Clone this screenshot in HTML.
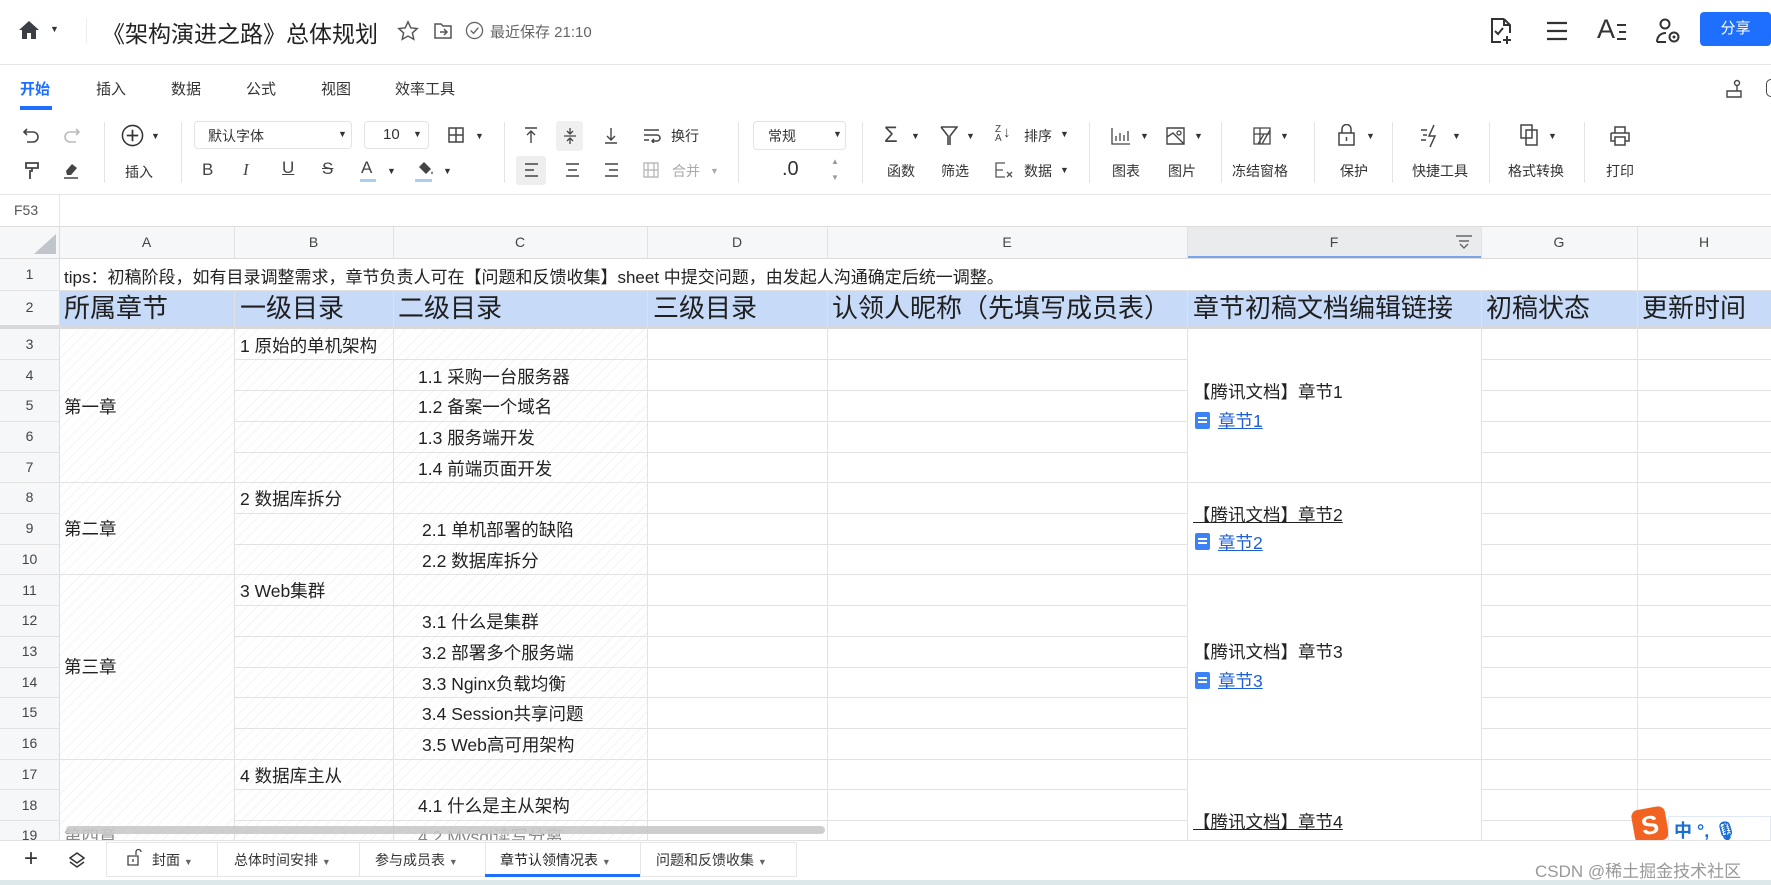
<!DOCTYPE html>
<html><head><meta charset="utf-8"><style>
*{margin:0;padding:0;box-sizing:border-box}
body{width:1771px;height:885px;overflow:hidden;background:#fff;position:relative;font-family:"Liberation Sans","Noto Sans CJK SC",sans-serif;color:#222}
.a{position:absolute;white-space:nowrap}
.hl{position:absolute;height:1px;background:#e2e2e2}
.vl{position:absolute;width:1px;background:#e2e2e2}
.t{font-size:14px;color:#333}
.tb{font-size:14px;color:#333;transform:translateX(-50%)}
.ic{position:absolute}
.car{position:absolute;font-size:9px;color:#333}
.sep{position:absolute;top:122px;height:61px;width:1px;background:#e4e4e4}
.rn{position:absolute;left:0;width:59px;text-align:center;font-size:14px;color:#444}
.c{position:absolute;font-size:17.5px;color:#222;white-space:nowrap;margin-top:-2px}
.h2{position:absolute;top:291px;height:34px;line-height:34px;font-size:26px;color:#1f1f1f}
</style></head><body>

<!-- top bar -->
<svg class="ic" style="left:18px;top:20px" width="22" height="20" viewBox="0 0 22 20"><path d="M11 1 L21 10 L18 10 L18 19 L13 19 L13 13 L9 13 L9 19 L4 19 L4 10 L1 10 Z" fill="#3b3f45"/></svg>
<div class="car" style="left:50px;top:24px">▼</div>
<div class="vl" style="left:86px;top:18px;height:26px;background:#eee"></div>
<div class="a" style="left:102px;top:15px;font-size:23px;color:#222">《架构演进之路》总体规划</div>
<svg class="ic" style="left:397px;top:20px" width="22" height="22" viewBox="0 0 24 24"><path d="M12 2l3 6.5 7 .8-5.2 4.8 1.5 7-6.3-3.6-6.3 3.6 1.5-7L2 9.3l7-.8z" fill="none" stroke="#555" stroke-width="1.6"/></svg>
<svg class="ic" style="left:433px;top:21px" width="20" height="20" viewBox="0 0 20 20"><path d="M2 3h6l2 2h8v12H2z" fill="none" stroke="#555" stroke-width="1.5"/><path d="M7 11h7M11 8l3 3-3 3" fill="none" stroke="#555" stroke-width="1.5"/></svg>
<svg class="ic" style="left:465px;top:21px" width="19" height="19" viewBox="0 0 20 20"><circle cx="10" cy="10" r="8.5" fill="none" stroke="#666" stroke-width="1.4"/><path d="M6 10l3 3 5-6" fill="none" stroke="#666" stroke-width="1.5"/></svg>
<div class="a" style="left:490px;top:21px;font-size:15px;color:#666">最近保存 21:10</div>
<svg class="ic" style="left:1489px;top:17px" width="26" height="28" viewBox="0 0 26 28"><path d="M15 2H3v23h9M15 2l6 6v8M15 2v6h6" fill="none" stroke="#333" stroke-width="2"/><path d="M6 14l3 3 5-6M18 19v8M14 23h8" fill="none" stroke="#333" stroke-width="2"/></svg>
<svg class="ic" style="left:1546px;top:20px" width="22" height="22" viewBox="0 0 22 22"><path d="M1 3h20M1 11h20M1 19h20" stroke="#333" stroke-width="2.2"/></svg>
<div class="a" style="left:1597px;top:14px;font-size:27px;color:#333">A</div>
<svg class="ic" style="left:1615px;top:22px" width="12" height="20" viewBox="0 0 12 20"><path d="M2 3h9M4 10h7M2 17h9" stroke="#333" stroke-width="2"/></svg>
<svg class="ic" style="left:1654px;top:17px" width="28" height="28" viewBox="0 0 28 28"><circle cx="11" cy="7" r="4.5" fill="none" stroke="#333" stroke-width="2"/><path d="M3 25c0-6 4-9 9-9" fill="none" stroke="#333" stroke-width="2"/><path d="M3 25h9" stroke="#333" stroke-width="2"/><circle cx="20" cy="20" r="4.5" fill="none" stroke="#333" stroke-width="2"/><circle cx="20" cy="20" r="1.5" fill="#333"/></svg>
<div class="a" style="left:1700px;top:12px;width:71px;height:34px;background:#1e6fff;border-radius:4px;color:#fff;font-size:15px;text-align:center;line-height:34px">分享</div>
<div class="hl" style="left:0;top:64px;width:1771px;background:#e6e6e6"></div>

<!-- menu tabs -->
<div class="a" style="left:20px;top:78px;font-size:15px;color:#1e6fff;font-weight:bold">开始</div>
<div class="a" style="left:20px;top:106px;width:32px;height:4px;background:#1e6fff"></div>
<div class="a" style="left:96px;top:78px;font-size:15px;color:#333">插入</div>
<div class="a" style="left:171px;top:78px;font-size:15px;color:#333">数据</div>
<div class="a" style="left:246px;top:78px;font-size:15px;color:#333">公式</div>
<div class="a" style="left:321px;top:78px;font-size:15px;color:#333">视图</div>
<div class="a" style="left:395px;top:78px;font-size:15px;color:#333">效率工具</div>
<svg class="ic" style="left:1725px;top:79px" width="18" height="20" viewBox="0 0 18 20"><circle cx="12" cy="4" r="2.5" fill="none" stroke="#444" stroke-width="1.4"/><path d="M12 7v5M2 12h14v6H2z" fill="none" stroke="#444" stroke-width="1.4"/></svg>
<div class="a" style="left:1766px;top:79px;width:10px;height:18px;border:1.5px solid #444;border-radius:9px"></div>

<!-- toolbar -->
<div class="sep" style="left:104px"></div><div class="sep" style="left:181px"></div><div class="sep" style="left:504px"></div><div class="sep" style="left:738px"></div><div class="sep" style="left:862px"></div><div class="sep" style="left:1089px"></div><div class="sep" style="left:1221px"></div><div class="sep" style="left:1314px"></div><div class="sep" style="left:1392px"></div><div class="sep" style="left:1489px"></div><div class="sep" style="left:1584px"></div>

<svg class="ic" style="left:22px;top:127px" width="18" height="16" viewBox="0 0 18 16"><path d="M5 2L2 5l3 3M2 5h9a5 5 0 010 10H5" fill="none" stroke="#444" stroke-width="1.6"/></svg>
<svg class="ic" style="left:63px;top:127px" width="18" height="16" viewBox="0 0 18 16"><path d="M13 2l3 3-3 3M16 5H7a5 5 0 000 10h6" fill="none" stroke="#bbb" stroke-width="1.6"/></svg>
<svg class="ic" style="left:24px;top:161px" width="16" height="19" viewBox="0 0 16 19"><path d="M2 2h12v5H2zM8 7v3H6v8" fill="none" stroke="#444" stroke-width="1.8"/></svg>
<svg class="ic" style="left:62px;top:161px" width="18" height="18" viewBox="0 0 18 18"><path d="M4 10l6-7 5 4-6 7H5z" fill="#444"/><path d="M2 17h14" stroke="#444" stroke-width="1.5"/></svg>

<svg class="ic" style="left:121px;top:124px" width="23" height="23" viewBox="0 0 24 24"><circle cx="12" cy="12" r="10.5" fill="none" stroke="#333" stroke-width="1.6"/><path d="M12 6v12M6 12h12" stroke="#333" stroke-width="1.8"/></svg>
<div class="car" style="left:151px;top:131px">▼</div>
<div class="a t" style="left:125px;top:162px">插入</div>

<div class="a" style="left:194px;top:121px;width:158px;height:28px;border:1px solid #e3e3e3;border-radius:4px"></div>
<div class="a t" style="left:208px;top:126px">默认字体</div>
<div class="car" style="left:338px;top:129px">▼</div>
<div class="a" style="left:364px;top:121px;width:65px;height:28px;border:1px solid #e3e3e3;border-radius:4px"></div>
<div class="a" style="left:383px;top:126px;font-size:15px;color:#333">10</div>
<div class="car" style="left:413px;top:129px">▼</div>
<svg class="ic" style="left:448px;top:127px" width="16" height="16" viewBox="0 0 16 16"><path d="M1 1h14v14H1zM8 1v14M1 8h14" fill="none" stroke="#444" stroke-width="1.5"/></svg>
<div class="car" style="left:475px;top:131px">▼</div>

<div class="a" style="left:202px;top:160px;font-size:17px;color:#444">B</div>
<div class="a" style="left:243px;top:160px;font-size:17px;color:#444;font-family:'Liberation Serif',serif;font-style:italic">I</div>
<div class="a" style="left:282px;top:158px;font-size:17px;color:#444;text-decoration:underline">U</div>
<div class="a" style="left:322px;top:159px;font-size:17px;color:#444;text-decoration:line-through">S</div>
<div class="a" style="left:361px;top:158px;font-size:17px;color:#444">A</div>
<div class="a" style="left:360px;top:179px;width:16px;height:3px;background:#a8cfef"></div>
<div class="car" style="left:387px;top:166px">▼</div>
<svg class="ic" style="left:416px;top:161px" width="18" height="16" viewBox="0 0 18 16"><path d="M8 1l7 7-5 5-7-7z" fill="#444"/><path d="M16 10c1 2 1 3 0 3s-1-1 0-3" fill="#444"/></svg>
<div class="a" style="left:415px;top:179px;width:17px;height:3px;background:#a8cfef"></div>
<div class="car" style="left:443px;top:166px">▼</div>

<svg class="ic" style="left:524px;top:127px" width="14" height="17" viewBox="0 0 14 17"><path d="M1 1h12M7 4v12M3 8l4-4 4 4" fill="none" stroke="#444" stroke-width="1.4"/></svg>
<div class="a" style="left:556px;top:121px;width:27px;height:30px;background:#f0f0f0;border-radius:3px"></div>
<svg class="ic" style="left:563px;top:127px" width="14" height="18" viewBox="0 0 14 18"><path d="M1 9h12M7 1v6M7 11v6M4 4l3 3 3-3M4 14l3-3 3 3" fill="none" stroke="#444" stroke-width="1.3"/></svg>
<svg class="ic" style="left:604px;top:127px" width="14" height="17" viewBox="0 0 14 17"><path d="M1 16h12M7 1v12M3 9l4 4 4-4" fill="none" stroke="#444" stroke-width="1.4"/></svg>
<svg class="ic" style="left:643px;top:128px" width="18" height="15" viewBox="0 0 18 15"><path d="M1 2h15M1 7h13a3 3 0 010 6H9M11 11l-2 2 2 2M1 12h5" fill="none" stroke="#444" stroke-width="1.5"/></svg>
<div class="a t" style="left:671px;top:126px">换行</div>

<div class="a" style="left:516px;top:156px;width:30px;height:29px;background:#eee;border-radius:3px"></div>
<svg class="ic" style="left:524px;top:163px" width="15" height="14" viewBox="0 0 15 14"><path d="M1 1h13M1 7h9M1 13h13" stroke="#444" stroke-width="1.6"/></svg>
<svg class="ic" style="left:565px;top:163px" width="15" height="14" viewBox="0 0 15 14"><path d="M1 1h13M3 7h9M1 13h13" stroke="#444" stroke-width="1.6"/></svg>
<svg class="ic" style="left:604px;top:163px" width="15" height="14" viewBox="0 0 15 14"><path d="M1 1h13M5 7h9M1 13h13" stroke="#444" stroke-width="1.6"/></svg>
<svg class="ic" style="left:643px;top:162px" width="16" height="16" viewBox="0 0 16 16"><path d="M1 1h14v14H1zM5 1v14M11 1v14M1 8h14" fill="none" stroke="#bbb" stroke-width="1.4"/></svg>
<div class="a t" style="left:672px;top:161px;color:#aaa">合并</div>
<div class="car" style="left:710px;top:166px;color:#aaa">▼</div>

<div class="a" style="left:753px;top:121px;width:93px;height:29px;border:1px solid #e3e3e3;border-radius:4px"></div>
<div class="a t" style="left:768px;top:126px">常规</div>
<div class="car" style="left:833px;top:129px">▼</div>
<div class="a" style="left:782px;top:158px;font-size:20px;color:#333">.0</div>
<div class="car" style="left:831px;top:157px;color:#999;font-size:8px">▲</div>
<div class="car" style="left:831px;top:173px;color:#999;font-size:8px">▼</div>

<div class="a" style="left:884px;top:122px;font-size:22px;color:#444">Σ</div>
<div class="car" style="left:911px;top:131px">▼</div>
<div class="a tb" style="left:901px;top:161px">函数</div>
<svg class="ic" style="left:940px;top:126px" width="18" height="20" viewBox="0 0 18 20"><path d="M1 1h16l-7 9v9M1 1l7 9v9" fill="none" stroke="#444" stroke-width="1.6"/></svg>
<div class="car" style="left:966px;top:131px">▼</div>
<div class="a tb" style="left:955px;top:161px">筛选</div>
<div class="a" style="left:995px;top:125px;font-size:10px;line-height:9px;color:#444">Z<br>A</div>
<div class="a" style="left:1003px;top:124px;font-size:15px;color:#444">↓</div>
<div class="a t" style="left:1024px;top:126px">排序</div>
<div class="car" style="left:1060px;top:129px">▼</div>
<svg class="ic" style="left:995px;top:162px" width="18" height="16" viewBox="0 0 18 16"><path d="M10 1H1v14h9M1 8h7M12 10l5 5M17 10l-5 5" fill="none" stroke="#555" stroke-width="1.3"/></svg>
<div class="a t" style="left:1024px;top:161px">数据</div>
<div class="car" style="left:1060px;top:165px">▼</div>

<svg class="ic" style="left:1111px;top:127px" width="20" height="18" viewBox="0 0 20 18"><path d="M1 1v16h18M5 14V9M9 14V6M13 14V8M17 14V4" fill="none" stroke="#444" stroke-width="1.3"/></svg>
<div class="car" style="left:1140px;top:131px">▼</div>
<div class="a tb" style="left:1126px;top:161px">图表</div>
<svg class="ic" style="left:1166px;top:127px" width="19" height="18" viewBox="0 0 19 18"><path d="M1 1h17v16H1zM1 10l6-4 11 11" fill="none" stroke="#444" stroke-width="1.4"/><circle cx="13" cy="6" r="2" fill="none" stroke="#444" stroke-width="1.3"/></svg>
<div class="car" style="left:1194px;top:131px">▼</div>
<div class="a tb" style="left:1182px;top:161px">图片</div>

<svg class="ic" style="left:1253px;top:127px" width="18" height="18" viewBox="0 0 18 18"><path d="M1 1h16v16H1zM7 1v16M1 7h16M11 7L5 17M17 3l-8 14" fill="none" stroke="#444" stroke-width="1.3"/></svg>
<div class="car" style="left:1280px;top:131px">▼</div>
<div class="a tb" style="left:1260px;top:161px">冻结窗格</div>

<svg class="ic" style="left:1338px;top:124px" width="17" height="22" viewBox="0 0 17 22"><path d="M4 9V5a4.5 4.5 0 019 0v4M1 9h15v12H1zM8.5 13v4" fill="none" stroke="#444" stroke-width="1.5"/></svg>
<div class="car" style="left:1366px;top:131px">▼</div>
<div class="a tb" style="left:1354px;top:161px">保护</div>

<svg class="ic" style="left:1420px;top:124px" width="24" height="24" viewBox="0 0 24 24"><path d="M14 1L9 12h6l-5 11M1 6h6M3 11h4M1 16h5" fill="none" stroke="#444" stroke-width="1.5"/></svg>
<div class="car" style="left:1452px;top:131px">▼</div>
<div class="a tb" style="left:1440px;top:161px">快捷工具</div>

<svg class="ic" style="left:1520px;top:124px" width="20" height="22" viewBox="0 0 20 22"><path d="M1 1h11v13H1zM6 6h11v15H6z" fill="#fff" stroke="#444" stroke-width="1.5"/></svg>
<div class="car" style="left:1548px;top:131px">▼</div>
<div class="a tb" style="left:1536px;top:161px">格式转换</div>

<svg class="ic" style="left:1610px;top:126px" width="20" height="20" viewBox="0 0 20 20"><path d="M5 7V1h10v6M1 7h18v8h-4M5 15H1V7M5 11h10v8H5z" fill="none" stroke="#444" stroke-width="1.5"/></svg>
<div class="a tb" style="left:1620px;top:161px">打印</div>

<div class="hl" style="left:0;top:194px;width:1771px;background:#e6e6e6"></div>
<!-- formula bar -->
<div class="a" style="left:14px;top:202px;font-size:14px;color:#555">F53</div>
<div class="vl" style="left:59px;top:195px;height:32px;background:#e6e6e6"></div>
<div class="hl" style="left:0;top:226px;width:1771px;background:#dcdcdc"></div>

<!-- column header -->
<div class="a" style="left:0;top:227px;width:1771px;height:31px;background:#f6f7f9"></div>
<div class="a" style="left:1187px;top:227px;width:294px;height:31px;background:#eaebed"></div>
<div class="a" style="left:1187px;top:256px;width:294px;height:2px;background:#7aa3e8"></div>
<svg class="ic" style="left:34px;top:234px" width="22" height="20" viewBox="0 0 22 20"><path d="M22 0V20H0z" fill="#c0c4cb"/></svg>
<div class="a" style="left:59px;top:234px;width:175px;text-align:center;font-size:14px;color:#444">A</div>
<div class="a" style="left:234px;top:234px;width:159px;text-align:center;font-size:14px;color:#444">B</div>
<div class="a" style="left:393px;top:234px;width:254px;text-align:center;font-size:14px;color:#444">C</div>
<div class="a" style="left:647px;top:234px;width:180px;text-align:center;font-size:14px;color:#444">D</div>
<div class="a" style="left:827px;top:234px;width:360px;text-align:center;font-size:14px;color:#444">E</div>
<div class="a" style="left:1187px;top:234px;width:294px;text-align:center;font-size:14px;color:#444">F</div>
<svg class="ic" style="left:1455px;top:234px" width="18" height="16" viewBox="0 0 18 16"><path d="M1 2h16M4 7h10M5 10l4 4 4-4" fill="none" stroke="#666" stroke-width="1.4"/></svg>
<div class="a" style="left:1481px;top:234px;width:156px;text-align:center;font-size:14px;color:#444">G</div>
<div class="a" style="left:1637px;top:234px;width:134px;text-align:center;font-size:14px;color:#444">H</div>

<!-- row header bg -->
<div class="a" style="left:0;top:258px;width:59px;height:582px;background:#f6f7f9"></div>

<!-- row 2 bg -->
<div class="a" style="left:59px;top:291px;width:1712px;height:34px;background:#c7dbf9"></div>
<div class="a" style="left:0;top:325px;width:1771px;height:4px;background:#d6d8dc"></div>

<!-- hatch A-C -->
<div class="a" style="left:59px;top:329px;width:588px;height:511px;background:repeating-linear-gradient(-45deg,#fff 0 6px,#f5f5f5 6px 7px)"></div>

<!-- vertical lines -->
<div class="vl" style="left:59px;top:227px;height:613px;background:#dcdcdc"></div>
<div class="vl" style="left:234px;top:227px;height:31px"></div><div class="vl" style="left:393px;top:227px;height:31px"></div><div class="vl" style="left:647px;top:227px;height:31px"></div><div class="vl" style="left:827px;top:227px;height:31px"></div><div class="vl" style="left:1187px;top:227px;height:31px"></div><div class="vl" style="left:1481px;top:227px;height:31px"></div>
<div class="vl" style="left:1637px;top:227px;height:613px"></div>
<div class="vl" style="left:234px;top:291px;height:549px"></div><div class="vl" style="left:393px;top:291px;height:549px"></div><div class="vl" style="left:647px;top:291px;height:549px"></div><div class="vl" style="left:827px;top:291px;height:549px"></div><div class="vl" style="left:1187px;top:291px;height:549px"></div><div class="vl" style="left:1481px;top:291px;height:549px"></div>
<div class="hl" style="left:0;top:258px;width:1771px;background:#dcdcdc"></div>
<div class="hl" style="left:0;top:290px;width:1771px"></div>

<div style="position:absolute;left:0;top:0">
<div class="hl" style="left:0;top:359px;width:59px"></div><div class="hl" style="left:234px;top:359px;width:953px"></div><div class="hl" style="left:1481px;top:359px;width:290px"></div>
<div class="hl" style="left:0;top:390px;width:59px"></div><div class="hl" style="left:234px;top:390px;width:953px"></div><div class="hl" style="left:1481px;top:390px;width:290px"></div>
<div class="hl" style="left:0;top:421px;width:59px"></div><div class="hl" style="left:234px;top:421px;width:953px"></div><div class="hl" style="left:1481px;top:421px;width:290px"></div>
<div class="hl" style="left:0;top:452px;width:59px"></div><div class="hl" style="left:234px;top:452px;width:953px"></div><div class="hl" style="left:1481px;top:452px;width:290px"></div>
<div class="hl" style="left:0;top:482px;width:1771px"></div>
<div class="hl" style="left:0;top:513px;width:59px"></div><div class="hl" style="left:234px;top:513px;width:953px"></div><div class="hl" style="left:1481px;top:513px;width:290px"></div>
<div class="hl" style="left:0;top:544px;width:59px"></div><div class="hl" style="left:234px;top:544px;width:953px"></div><div class="hl" style="left:1481px;top:544px;width:290px"></div>
<div class="hl" style="left:0;top:574px;width:1771px"></div>
<div class="hl" style="left:0;top:605px;width:59px"></div><div class="hl" style="left:234px;top:605px;width:953px"></div><div class="hl" style="left:1481px;top:605px;width:290px"></div>
<div class="hl" style="left:0;top:636px;width:59px"></div><div class="hl" style="left:234px;top:636px;width:953px"></div><div class="hl" style="left:1481px;top:636px;width:290px"></div>
<div class="hl" style="left:0;top:667px;width:59px"></div><div class="hl" style="left:234px;top:667px;width:953px"></div><div class="hl" style="left:1481px;top:667px;width:290px"></div>
<div class="hl" style="left:0;top:697px;width:59px"></div><div class="hl" style="left:234px;top:697px;width:953px"></div><div class="hl" style="left:1481px;top:697px;width:290px"></div>
<div class="hl" style="left:0;top:728px;width:59px"></div><div class="hl" style="left:234px;top:728px;width:953px"></div><div class="hl" style="left:1481px;top:728px;width:290px"></div>
<div class="hl" style="left:0;top:759px;width:1771px"></div>
<div class="hl" style="left:0;top:789px;width:59px"></div><div class="hl" style="left:234px;top:789px;width:953px"></div><div class="hl" style="left:1481px;top:789px;width:290px"></div>
<div class="hl" style="left:0;top:820px;width:59px"></div><div class="hl" style="left:234px;top:820px;width:953px"></div><div class="hl" style="left:1481px;top:820px;width:290px"></div>
</div>

<!-- row numbers -->
<div class="rn" style="top:266px">1</div><div class="rn" style="top:299px">2</div>
<div class="rn" style="top:336px">3</div><div class="rn" style="top:367px">4</div><div class="rn" style="top:397px">5</div><div class="rn" style="top:428px">6</div><div class="rn" style="top:459px">7</div><div class="rn" style="top:489px">8</div><div class="rn" style="top:520px">9</div><div class="rn" style="top:551px">10</div><div class="rn" style="top:582px">11</div><div class="rn" style="top:612px">12</div><div class="rn" style="top:643px">13</div><div class="rn" style="top:674px">14</div><div class="rn" style="top:704px">15</div><div class="rn" style="top:735px">16</div><div class="rn" style="top:766px">17</div><div class="rn" style="top:797px">18</div><div class="rn" style="top:827px">19</div>

<!-- row 1 -->
<div class="c" style="left:64px;top:265px;font-size:17px">tips：初稿阶段，如有目录调整需求，章节负责人可在【问题和反馈收集】sheet 中提交问题，由发起人沟通确定后统一调整。</div>
<!-- row 2 -->
<div class="h2" style="left:64px">所属章节</div><div class="h2" style="left:240px">一级目录</div><div class="h2" style="left:398px">二级目录</div><div class="h2" style="left:653px">三级目录</div><div class="h2" style="left:832px">认领人昵称（先填写成员表）</div><div class="h2" style="left:1193px">章节初稿文档编辑链接</div><div class="h2" style="left:1486px">初稿状态</div><div class="h2" style="left:1642px">更新时间</div>

<!-- data -->
<div class="c" style="left:64px;top:396px">第一章</div>
<div class="c" style="left:64px;top:518px">第二章</div>
<div class="c" style="left:64px;top:656px">第三章</div>
<div class="c" style="left:64px;top:826px;color:#888">第四章</div>

<div class="c" style="left:240px;top:335px">1 原始的单机架构</div>
<div class="c" style="left:418px;top:366px">1.1 采购一台服务器</div>
<div class="c" style="left:418px;top:396px">1.2 备案一个域名</div>
<div class="c" style="left:418px;top:427px">1.3 服务端开发</div>
<div class="c" style="left:418px;top:458px">1.4 前端页面开发</div>
<div class="c" style="left:240px;top:488px">2 数据库拆分</div>
<div class="c" style="left:422px;top:519px">2.1 单机部署的缺陷</div>
<div class="c" style="left:422px;top:550px">2.2 数据库拆分</div>
<div class="c" style="left:240px;top:580px">3 Web集群</div>
<div class="c" style="left:422px;top:611px">3.1 什么是集群</div>
<div class="c" style="left:422px;top:642px">3.2 部署多个服务端</div>
<div class="c" style="left:422px;top:673px">3.3 Nginx负载均衡</div>
<div class="c" style="left:422px;top:703px">3.4 Session共享问题</div>
<div class="c" style="left:422px;top:734px">3.5 Web高可用架构</div>
<div class="c" style="left:240px;top:765px">4 数据库主从</div>
<div class="c" style="left:418px;top:795px">4.1 什么是主从架构</div>
<div class="c" style="left:418px;top:826px;color:#888">4.2 Mysql读写分离</div>

<!-- F column -->
<div class="c" style="left:1193px;top:381px">【腾讯文档】章节1</div>
<div class="a" style="left:1195px;top:412px;width:15px;height:17px;background:#3b82f6;border-radius:2px"></div>
<div class="a" style="left:1198px;top:417px;width:9px;height:1.5px;background:#fff"></div><div class="a" style="left:1198px;top:421px;width:9px;height:1.5px;background:#fff"></div>
<div class="c" style="left:1218px;top:410px;color:#1e5fd6;text-decoration:underline">章节1</div>

<div class="c" style="left:1193px;top:504px;text-decoration:underline">【腾讯文档】章节2</div>
<div class="a" style="left:1195px;top:533px;width:15px;height:17px;background:#3b82f6;border-radius:2px"></div>
<div class="a" style="left:1198px;top:538px;width:9px;height:1.5px;background:#fff"></div><div class="a" style="left:1198px;top:542px;width:9px;height:1.5px;background:#fff"></div>
<div class="c" style="left:1218px;top:532px;color:#1e5fd6;text-decoration:underline">章节2</div>

<div class="c" style="left:1193px;top:641px">【腾讯文档】章节3</div>
<div class="a" style="left:1195px;top:672px;width:15px;height:17px;background:#3b82f6;border-radius:2px"></div>
<div class="a" style="left:1198px;top:677px;width:9px;height:1.5px;background:#fff"></div><div class="a" style="left:1198px;top:681px;width:9px;height:1.5px;background:#fff"></div>
<div class="c" style="left:1218px;top:670px;color:#1e5fd6;text-decoration:underline">章节3</div>

<div class="c" style="left:1193px;top:811px;text-decoration:underline">【腾讯文档】章节4</div>

<!-- scrollbar -->
<div class="a" style="left:66px;top:826px;width:759px;height:8px;background:#c9c9c9;border-radius:4px;opacity:.9"></div>

<!-- sogou IME -->
<div class="a" style="left:1633px;top:808px;width:34px;height:34px;background:#f26322;border-radius:7px;transform:rotate(-10deg);color:#fff;font-weight:bold;font-size:26px;text-align:center;line-height:34px">S</div>
<div class="a" style="left:1668px;top:816px;width:103px;height:30px;background:#fff;border:1px solid #e0e8f5"></div>
<div class="a" style="left:1674px;top:817px;font-size:18px;color:#1a6fd6;font-weight:bold">中 °, 🎙</div>

<!-- sheet tabs -->
<div class="a" style="left:0;top:840px;width:1771px;height:40px;background:#fff;border-top:1px solid #e3e3e3"></div>
<div class="a" style="left:0;top:880px;width:1771px;height:5px;background:#dde8ec"></div>
<div class="a" style="left:24px;top:845px;font-size:24px;color:#333;font-weight:300">+</div>
<svg class="ic" style="left:69px;top:852px" width="16" height="17" viewBox="0 0 16 17"><path d="M8 1l7 5-7 5-7-5zM1 10l7 5 7-5" fill="none" stroke="#333" stroke-width="1.5"/></svg>
<div class="a" style="left:106px;top:842px;width:691px;height:35px;border:1px solid #e6e6e6"></div>
<div class="vl" style="left:217px;top:842px;height:35px;background:#e6e6e6"></div>
<div class="vl" style="left:359px;top:842px;height:35px;background:#e6e6e6"></div>
<div class="vl" style="left:485px;top:842px;height:35px;background:#e6e6e6"></div>
<div class="vl" style="left:640px;top:842px;height:35px;background:#e6e6e6"></div>
<svg class="ic" style="left:127px;top:849px" width="15" height="17" viewBox="0 0 15 17"><path d="M9 6V3a2.5 2.5 0 015 0M1 7h10v9H1zM6 10v3" fill="none" stroke="#444" stroke-width="1.3"/></svg>
<div class="a t" style="left:152px;top:850px">封面 <span style="font-size:9px;color:#666">▼</span></div>
<div class="a t" style="left:234px;top:850px">总体时间安排 <span style="font-size:9px;color:#666">▼</span></div>
<div class="a t" style="left:375px;top:850px">参与成员表 <span style="font-size:9px;color:#666">▼</span></div>
<div class="a t" style="left:500px;top:850px;color:#222">章节认领情况表 <span style="font-size:9px;color:#666">▼</span></div>
<div class="a" style="left:485px;top:874px;width:155px;height:3px;background:#1e6fff"></div>
<div class="a t" style="left:656px;top:850px">问题和反馈收集 <span style="font-size:9px;color:#666">▼</span></div>
<div class="a" style="left:1535px;top:857px;font-size:17px;color:#999">CSDN @稀土掘金技术社区</div>
</body></html>
